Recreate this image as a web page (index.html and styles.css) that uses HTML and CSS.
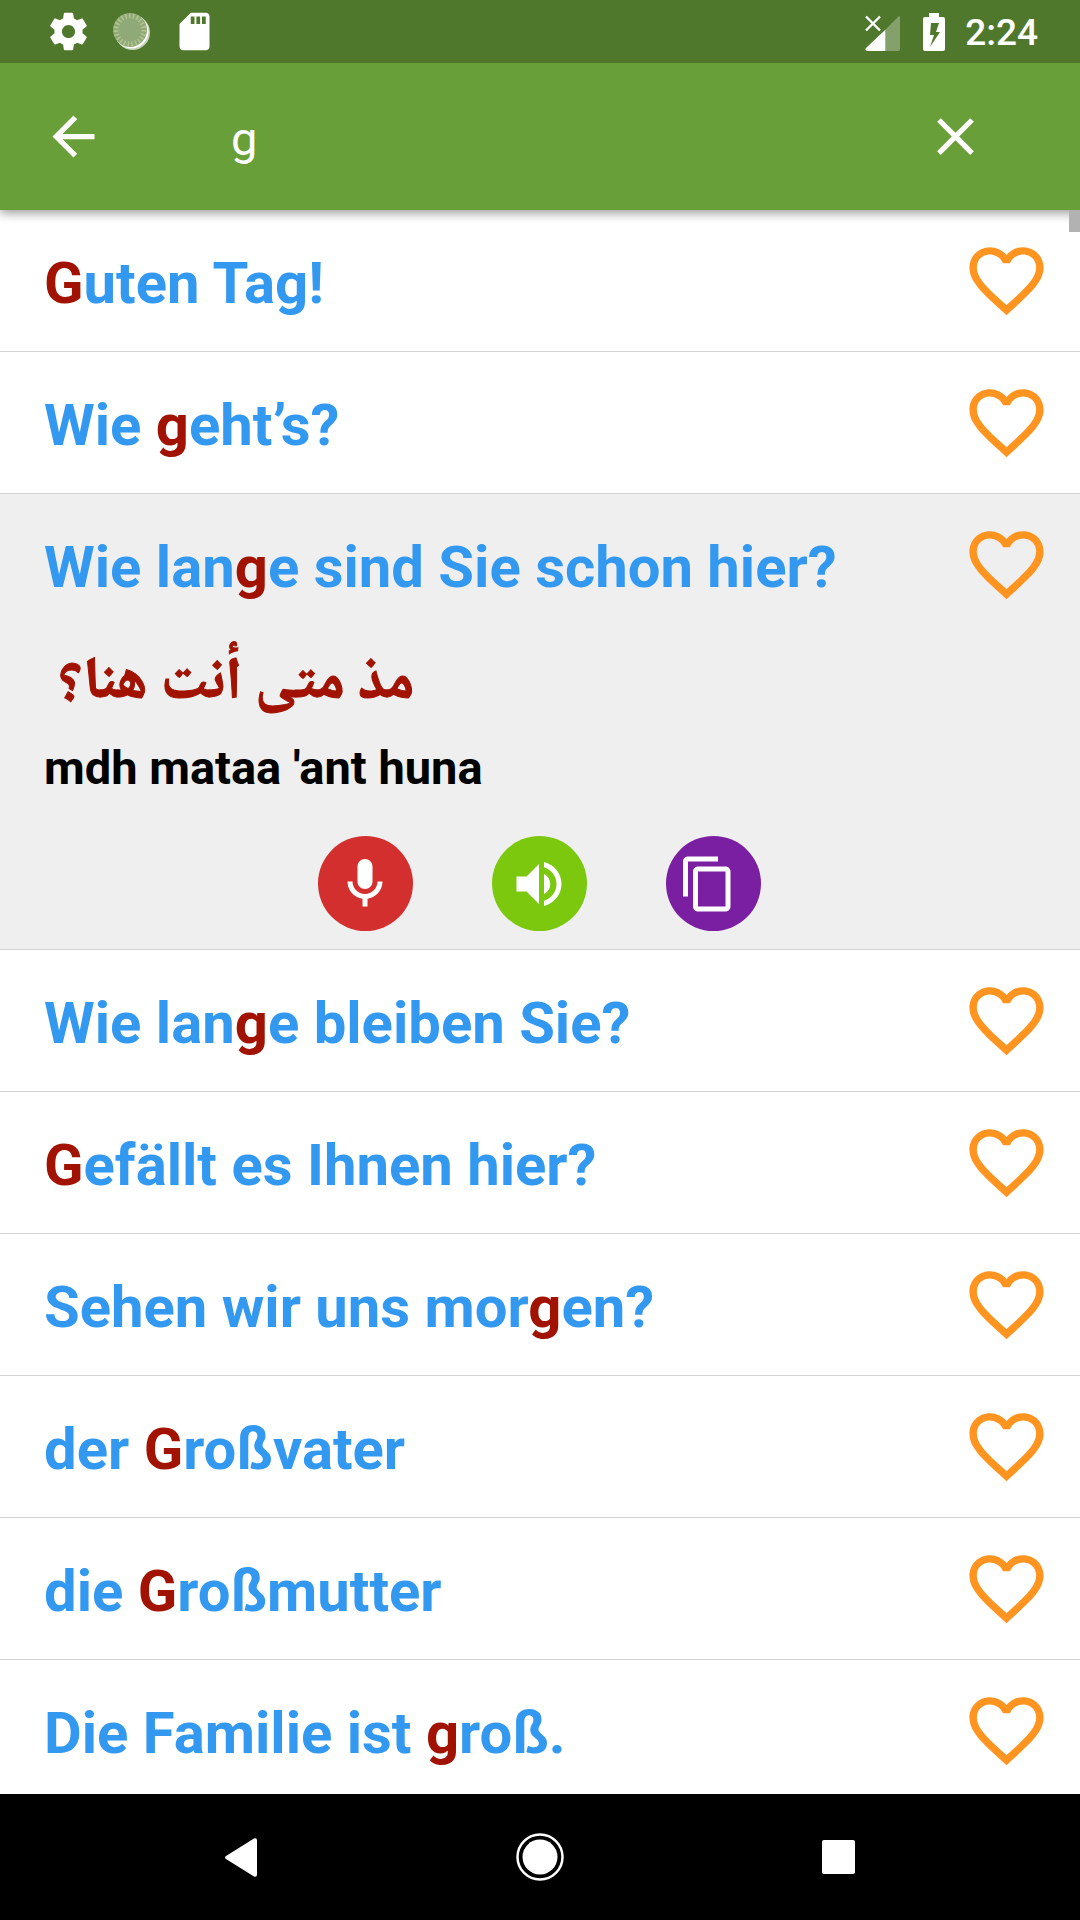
FILE: index.html
```html
<!DOCTYPE html>
<html lang="de">
<head>
<meta charset="utf-8">
<meta name="viewport" content="width=device-width, initial-scale=1">
<title>Suche</title>
<link rel="stylesheet" href="styles.css">
</head>
<body>
<svg class="sprite" aria-hidden="true">
  <symbol id="heart" viewBox="0 0 24 24"><path d="M16.5 3c-1.74 0-3.41.81-4.5 2.09C10.91 3.81 9.24 3 7.5 3 4.42 3 2 5.42 2 8.5c0 3.78 3.4 6.86 8.55 11.54L12 21.35l1.45-1.32C18.6 15.36 22 12.28 22 8.5 22 5.42 19.58 3 16.5 3zm-4.4 15.55l-.1.1-.1-.1C7.14 14.24 4 11.39 4 8.5 4 6.5 5.5 5 7.5 5c1.54 0 3.04.99 3.57 2.36h1.87C13.46 5.99 14.96 5 16.5 5c2 0 3.5 1.5 3.5 3.5 0 2.89-3.14 5.74-7.9 10.05z"/></symbol>
</svg>

<div class="status">
  <div class="status-group status-left">
    <svg class="status-icon" viewBox="0 0 24 24"><path d="M19.43 12.98c.04-.32.07-.64.07-.98s-.03-.66-.07-.98l2.11-1.65c.19-.15.24-.42.12-.64l-2-3.46c-.12-.22-.39-.3-.61-.22l-2.49 1c-.52-.4-1.08-.73-1.69-.98l-.38-2.65C14.46 2.18 14.25 2 14 2h-4c-.25 0-.46.18-.49.42l-.38 2.65c-.61.25-1.17.59-1.69.98l-2.49-1c-.23-.09-.49 0-.61.22l-2 3.46c-.13.22-.07.49.12.64l2.11 1.65c-.04.32-.07.65-.07.98s.03.66.07.98l-2.11 1.65c-.19.15-.24.42-.12.64l2 3.46c.12.22.39.3.61.22l2.49-1c.52.4 1.08.73 1.69.98l.38 2.65c.03.24.24.42.49.42h4c.25 0 .46-.18.49-.42l.38-2.65c.61-.25 1.17-.59 1.69-.98l2.49 1c.23.09.49 0 .61-.22l2-3.46c.12-.22.07-.49-.12-.64l-2.11-1.65zM12 15.5c-1.93 0-3.5-1.57-3.5-3.5s1.57-3.5 3.5-3.5 3.5 1.57 3.5 3.5-1.57 3.5-3.5 3.500z"/></svg>
    <svg class="status-icon" viewBox="0 0 45 45">
      <circle cx="23.500" cy="23.500" r="17.500" fill="#c3d3b6"/>
      <circle cx="22.500" cy="22.500" r="17" fill="#fff"/>
      <circle cx="21" cy="21" r="17" fill="#8fa978"/>
      <circle cx="21" cy="21" r="14" fill="none" stroke="#b4c58f" stroke-width="5" stroke-dasharray="1.500 2.300"/>
    </svg>
    <svg class="status-icon" viewBox="0 0 24 24"><path d="M18 2h-8L4.020 8 4 20c0 1.100.9 2 2 2h12c1.100 0 2-.9 2-2V4c0-1.100-.9-2-2-2zm-6 6h-2V4h2v4zm3 0h-2V4h2v4zm3 0h-2V4h2v4z"/></svg>
  </div>
  <div class="status-group status-right">
    <svg class="signal" viewBox="0 0 36 38">
      <path d="M34 3 21 16v22h12q2 0 2-2V4q0-1-1-1z" opacity=".3"/>
      <path d="M20.500 16.500v21.500H2q-2.500-1-1-3z"/>
      <path d="M1 3.500 15 17.500M15 3.500 1 17.500" fill="none" stroke="#fff" stroke-width="2.400"/>
    </svg>
    <svg class="battery" viewBox="0 0 22 38"><path fill-rule="evenodd" d="M6 0h10v4h4q2 0 2 2v30q0 2-2 2H2q-2 0-2-2V6q0-2 2-2h4zM8 10 7 22h4L7 34l10-15h-4l3-9z"/></svg>
    <time>2:24</time>
  </div>
</div>

<header class="toolbar">
  <button class="tool" type="button" aria-label="Zurück"><svg viewBox="0 0 24 24"><path d="M20 11H7.830l5.590-5.590L12 4l-8 8 8 8 1.410-1.410L7.830 13H20v-2z"/></svg></button>
  <input class="search" type="text" value="g" aria-label="Suche">
  <button class="tool" type="button" aria-label="Löschen"><svg viewBox="0 0 24 24"><path d="M19 6.410 17.590 5 12 10.590 6.410 5 5 6.410 10.590 12 5 17.590 6.410 19 12 13.410 17.590 19 19 17.590 13.410 12z"/></svg></button>
</header>

<main class="results">
  <div class="thumb"></div>
  <ul class="list">
    <li class="item"><div class="row"><h2><mark>G</mark>uten Tag!</h2><button class="fav" type="button" aria-label="Favorit"><svg><use href="#heart"/></svg></button></div></li>
    <li class="item"><div class="row"><h2>Wie <mark>g</mark>eht’s?</h2><button class="fav" type="button" aria-label="Favorit"><svg><use href="#heart"/></svg></button></div></li>
    <li class="item open">
      <div class="row"><h2>Wie lan<mark>g</mark>e sind Sie schon hier?</h2><button class="fav" type="button" aria-label="Favorit"><svg><use href="#heart"/></svg></button></div>
      <p class="arabic"><span lang="ar" dir="rtl">مذ متى أنت هنا؟</span></p>
      <p class="translit">mdh mataa 'ant huna</p>
      <div class="actions">
        <button class="action mic" type="button" aria-label="Aufnehmen"><svg viewBox="0 0 24 24"><path d="M12 14c1.660 0 3-1.340 3-3V5c0-1.660-1.340-3-3-3S9 3.340 9 5v6c0 1.660 1.340 3 3 3zm5-3c0 2.760-2.240 5-5 5s-5-2.240-5-5H5c0 3.530 2.610 6.430 6 6.920V21h2v-3.080c3.390-.49 6-3.390 6-6.920h-2z"/></svg></button>
        <button class="action sound" type="button" aria-label="Anhören"><svg viewBox="0 0 24 24"><path d="M3 9v6h4l5 5V4L7 9H3zm13.500 3c0-1.770-1.020-3.290-2.500-4.030v8.050c1.480-.73 2.500-2.250 2.500-4.020zM14 3.230v2.060c2.890.86 5 3.540 5 6.710s-2.110 5.850-5 6.710v2.060c4.010-.91 7-4.490 7-8.770s-2.990-7.860-7-8.770z"/></svg></button>
        <button class="action copy" type="button" aria-label="Kopieren"><svg viewBox="2 0 24 24"><path d="M16 1H4c-1.100 0-2 .9-2 2v14h2V3h12V1zm3 4H8c-1.100 0-2 .9-2 2v14c0 1.100.9 2 2 2h11c1.100 0 2-.9 2-2V7c0-1.100-.9-2-2-2zm0 16H8V7h11v14z"/></svg></button>
      </div>
    </li>
    <li class="item"><div class="row"><h2>Wie lan<mark>g</mark>e bleiben Sie?</h2><button class="fav" type="button" aria-label="Favorit"><svg><use href="#heart"/></svg></button></div></li>
    <li class="item"><div class="row"><h2><mark>G</mark>efällt es Ihnen hier?</h2><button class="fav" type="button" aria-label="Favorit"><svg><use href="#heart"/></svg></button></div></li>
    <li class="item"><div class="row"><h2>Sehen wir uns mor<mark>g</mark>en?</h2><button class="fav" type="button" aria-label="Favorit"><svg><use href="#heart"/></svg></button></div></li>
    <li class="item"><div class="row"><h2>der <mark>G</mark>roßvater</h2><button class="fav" type="button" aria-label="Favorit"><svg><use href="#heart"/></svg></button></div></li>
    <li class="item"><div class="row"><h2>die <mark>G</mark>roßmutter</h2><button class="fav" type="button" aria-label="Favorit"><svg><use href="#heart"/></svg></button></div></li>
    <li class="item"><div class="row"><h2>Die Familie ist <mark>g</mark>roß.</h2><button class="fav" type="button" aria-label="Favorit"><svg><use href="#heart"/></svg></button></div></li>
  </ul>
</main>

<nav class="navbar">
  <button type="button" aria-label="Zurück"><svg viewBox="0 0 50 50"><path d="M38 6.500q3-1 3 2v34q0 3-3 2L10 27q-2-1.500 0-3z"/></svg></button>
  <button type="button" aria-label="Start"><svg viewBox="0 0 50 50"><circle cx="25" cy="25" r="17.500"/><circle cx="25" cy="25" r="22.500" fill="none" stroke="#fff" stroke-width="2.500"/></svg></button>
  <button type="button" aria-label="Übersicht"><svg viewBox="0 0 50 50"><rect x="8" y="8" width="33" height="34" rx="2"/></svg></button>
</nav>
</body>
</html>
```
FILE: styles.css
```css
* {
  box-sizing: border-box;
}

body {
  margin: 0;
  height: 100vh;
  display: flex;
  flex-direction: column;
  background: #fff;
  font-family: Roboto, "Liberation Sans", sans-serif;
}

svg {
  display: block;
  fill: #fff;
}

button {
  display: block;
  padding: 0;
  border: 0;
  background: none;
}

.sprite {
  position: absolute;
  width: 0;
  height: 0;
}

/* System status bar */
.status {
  position: relative;
  z-index: 2;
  flex: none;
  display: flex;
  justify-content: space-between;
  height: 63px;
  padding: 0 42px 0 46px;
  background: #50782c;
}

.status-group {
  display: flex;
  align-items: center;
}

.status-left {
  gap: 18px;
}

.status-icon {
  width: 45px;
  height: 45px;
}

.signal {
  width: 36px;
  height: 38px;
  margin-right: 22px;
}

.battery {
  width: 22px;
  height: 38px;
  margin-right: 20px;
}

.status time {
  color: #fff;
  font-size: 37px;
  font-weight: 500;
  line-height: 42px;
  padding-top: 3px;
}

/* Search toolbar */
.toolbar {
  position: relative;
  z-index: 1;
  flex: none;
  display: flex;
  align-items: center;
  height: 147px;
  padding: 0 93px 0 42px;
  background: #689f38;
  box-shadow: 0 3px 10px rgba(0, 0, 0, 0.4);
}

.tool svg {
  width: 63px;
  height: 63px;
}

.search {
  flex: 1;
  min-width: 0;
  margin-left: 126px;
  padding: 4px 0 0;
  border: 0;
  outline: 0;
  background: none;
  color: #fff;
  font: 400 47px/56px Roboto, "Liberation Sans", sans-serif;
}

/* Result list */
.results {
  position: relative;
  flex: 1;
  min-height: 0;
  overflow: hidden;
}

.thumb {
  position: absolute;
  z-index: 2;
  top: 0;
  right: 0;
  width: 11px;
  height: 22px;
  background: #b2b2b2;
}

.list {
  margin: 0;
  padding: 0;
  list-style: none;
}

.item {
  border-bottom: 1px solid #d3d3d3;
}

.open {
  background: #efefef;
}

.row {
  display: flex;
  align-items: center;
  justify-content: space-between;
  height: 141px;
  padding: 0 29px 0 44px;
}

h2 {
  margin: 0;
  padding-top: 4px;
  color: #3399f0;
  font-size: 58px;
  font-weight: 700;
  line-height: 68px;
}

mark {
  background: none;
  color: #a11200;
}

.fav svg {
  width: 89px;
  height: 89px;
  fill: #ff9520;
}

.arabic,
.translit {
  margin: 0;
  padding: 0 44px;
  font-weight: 700;
}

.arabic {
  padding-left: 58px;
  padding-bottom: 5px;
  color: #a11200;
  font-family: "Noto Naskh Arabic", "DejaVu Sans", sans-serif;
  font-size: 59px;
  line-height: 100px;
  -webkit-text-stroke: 1px #a11200;
}

.translit {
  color: #000;
  font-size: 47px;
  line-height: 56px;
}

.actions {
  display: flex;
  justify-content: center;
  gap: 79px;
  padding: 40px 2px 18px 0;
}

.action {
  display: flex;
  align-items: center;
  justify-content: center;
  width: 95px;
  height: 95px;
  border-radius: 50%;
}

.action svg {
  width: 60px;
  height: 60px;
}

.mic {
  background: #d32f2f;
}

.sound {
  background: #7bc80e;
}

.copy {
  background: #7b1fa2;
}

/* System navigation bar */
.navbar {
  flex: none;
  display: flex;
  align-items: center;
  justify-content: center;
  gap: 249px;
  height: 126px;
  background: #000;
}

.navbar svg {
  width: 50px;
  height: 50px;
}
```
